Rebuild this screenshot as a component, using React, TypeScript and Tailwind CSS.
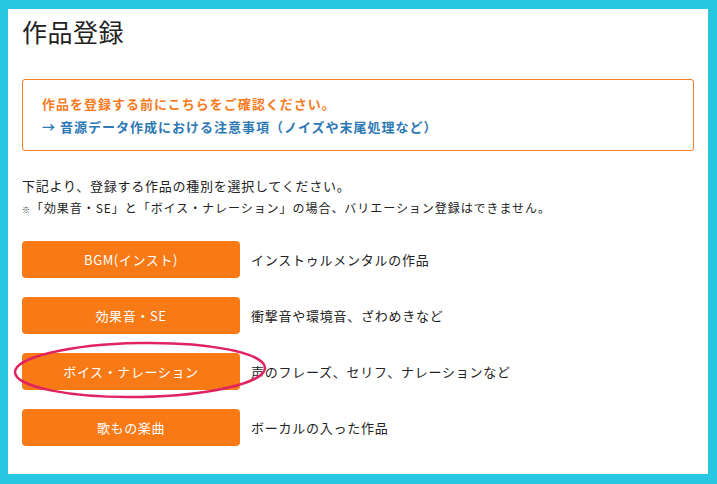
import React from 'react';

const kinds = [
  { label: 'BGM(インスト)', desc: 'インストゥルメンタルの作品' },
  { label: '効果音・SE', desc: '衝撃音や環境音、ざわめきなど' },
  { label: 'ボイス・ナレーション', desc: '声のフレーズ、セリフ、ナレーションなど', marked: true },
  { label: '歌もの楽曲', desc: 'ボーカルの入った作品' },
];

export default function App() {
  return (
    <div
      className="w-[717px] h-[484px] bg-[#27c6e1] pt-[9px] pl-[8px] pr-[9px] pb-[10px]"
      style={{ fontFamily: '"Noto Sans CJK JP", "Noto Sans", sans-serif' }}
    >
      <div className="h-full bg-white px-[14px] pt-[6px]">
        <h1 className="text-[25px] leading-[32px] font-normal tracking-[0.5px] text-[#222]">作品登録</h1>

        <div className="mt-[32px] border border-[#f57c1f] rounded-[3px] px-[19px] py-[12px]">
          <p className="text-[13px] leading-[23px] font-bold tracking-[1px] text-[#f57c1f]">
            作品を登録する前にこちらをご確認ください。
          </p>
          <p className="text-[13px] leading-[23px] font-bold tracking-[1px] text-[#2d79b6]">
            → 音源データ作成における注意事項（ノイズや末尾処理など）
          </p>
        </div>

        <p className="mt-[25px] text-[13px] leading-[20px] tracking-[0.75px] text-[#222]">
          下記より、登録する作品の種別を選択してください。
        </p>
        <p className="mt-[3px] text-[12px] leading-[18px] tracking-[0.95px] text-[#222]">
          <span className="text-[8px]">※</span>「効果音・SE」と「ボイス・ナレーション」の場合、バリエーション登録はできません。
        </p>

        <div className="mt-[22px] flex flex-col gap-[19px]">
          {kinds.map((k) => (
            <div key={k.label} className="relative flex items-center">
              <button className="w-[218px] h-[37px] rounded-[4px] bg-[#f87a17] text-white text-[13px] tracking-[0.6px]">
                {k.label}
              </button>
              <span className="ml-[11px] text-[13px] tracking-[0.75px] text-[#222]">{k.desc}</span>
              {k.marked && (
                <svg
                  className="absolute left-[-10px] top-[-13px] pointer-events-none"
                  width="258"
                  height="60"
                  viewBox="0 0 258 60"
                >
                  <ellipse
                    cx="128"
                    cy="30"
                    rx="125"
                    ry="27"
                    fill="none"
                    stroke="#e1245f"
                    strokeWidth="2.5"
                    transform="rotate(-1 128 30)"
                  />
                </svg>
              )}
            </div>
          ))}
        </div>
      </div>
    </div>
  );
}
